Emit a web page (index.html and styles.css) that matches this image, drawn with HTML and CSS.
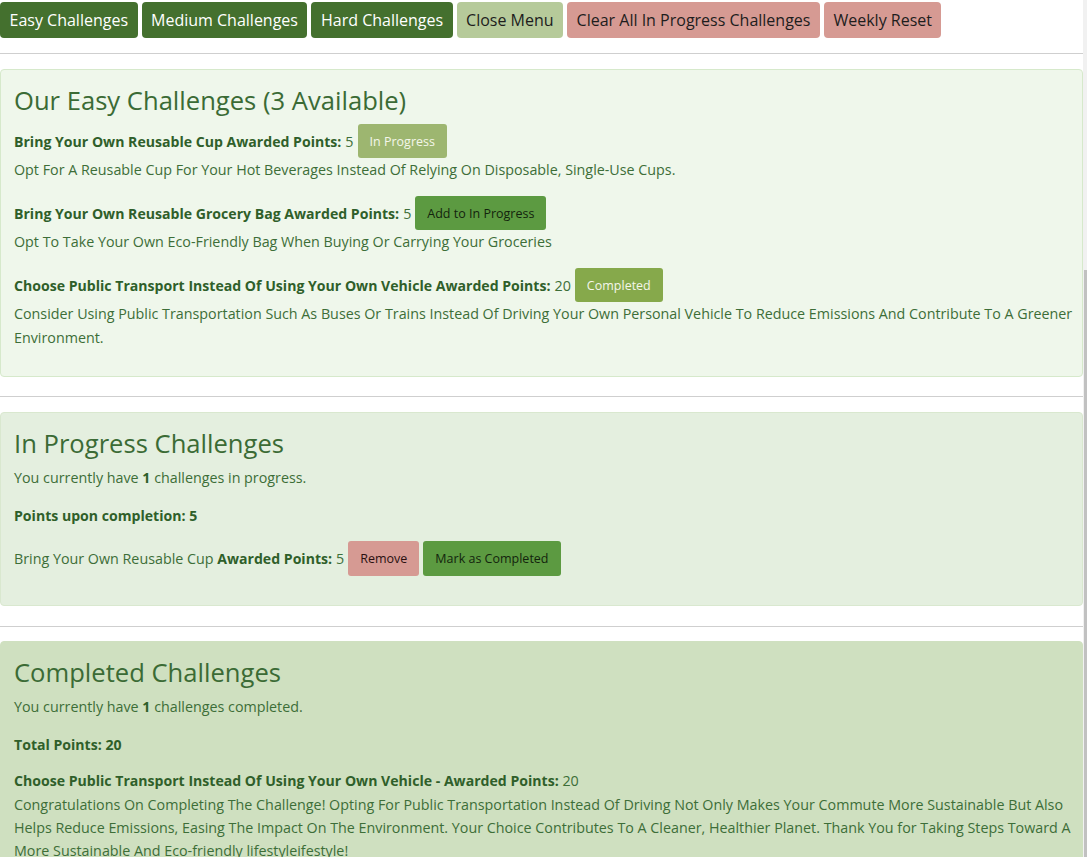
FILE: index.html
```html
<!DOCTYPE html>
<html lang="en">
<head>
<meta charset="utf-8">
<title>Challenges</title>
<link rel="stylesheet" href="styles.css">
</head>
<body>
<div class="page">
  <nav class="menu">
    <button class="mbtn mbtn-dark">Easy Challenges</button>
    <button class="mbtn mbtn-dark">Medium Challenges</button>
    <button class="mbtn mbtn-dark">Hard Challenges</button>
    <button class="mbtn mbtn-light">Close Menu</button>
    <button class="mbtn mbtn-red">Clear All In Progress Challenges</button>
    <button class="mbtn mbtn-red">Weekly Reset</button>
  </nav>
  <hr class="rule rule-top">

  <section class="card card-easy">
    <h2 class="card-title">Our Easy Challenges (3 Available)</h2>
    <div class="challenge">
      <div class="row"><strong>Bring Your Own Reusable Cup Awarded Points:</strong><span class="pts">5</span><button class="sbtn sbtn-inprog">In Progress</button></div>
      <p class="desc">Opt For A Reusable Cup For Your Hot Beverages Instead Of Relying On Disposable, Single-Use Cups.</p>
    </div>
    <div class="challenge">
      <div class="row"><strong>Bring Your Own Reusable Grocery Bag Awarded Points:</strong><span class="pts">5</span><button class="sbtn sbtn-add">Add to In Progress</button></div>
      <p class="desc">Opt To Take Your Own Eco-Friendly Bag When Buying Or Carrying Your Groceries</p>
    </div>
    <div class="challenge">
      <div class="row"><strong>Choose Public Transport Instead Of Using Your Own Vehicle Awarded Points:</strong><span class="pts">20</span><button class="sbtn sbtn-done">Completed</button></div>
      <p class="desc">Consider Using Public Transportation Such As Buses Or Trains Instead Of Driving Your Own Personal Vehicle To Reduce Emissions And Contribute To A Greener Environment.</p>
    </div>
  </section>
  <hr class="rule rule-mid">

  <section class="card card-progress">
    <h2 class="card-title">In Progress Challenges</h2>
    <p class="info info-first">You currently have <strong>1</strong> challenges in progress.</p>
    <p class="info info-strong"><strong>Points upon completion: 5</strong></p>
    <div class="row row-progress"><span>Bring Your Own Reusable Cup <strong>Awarded Points:</strong></span><span class="pts">5</span><button class="sbtn sbtn-remove">Remove</button><button class="sbtn sbtn-add">Mark as Completed</button></div>
  </section>
  <hr class="rule rule-low">

  <section class="card card-done">
    <h2 class="card-title">Completed Challenges</h2>
    <p class="info info-first">You currently have <strong>1</strong> challenges completed.</p>
    <p class="info info-strong"><strong>Total Points: 20</strong></p>
    <p class="info info-head"><strong>Choose Public Transport Instead Of Using Your Own Vehicle - Awarded Points:</strong> 20</p>
    <p class="congrats">Congratulations On Completing The Challenge! Opting For Public Transportation Instead Of Driving Not Only Makes Your Commute More Sustainable But Also Helps Reduce Emissions, Easing The Impact On The Environment. Your Choice Contributes To A Cleaner, Healthier Planet. Thank You for Taking Steps Toward A More Sustainable And Eco-friendly lifestyleifestyle!</p>
  </section>
</div>
<div class="scrollbar"><div class="thumb"></div></div>
</body>
</html>
```

FILE: styles.css
```css
html, body {
  margin: 0;
  padding: 0;
  overflow: hidden;
  background: #ffffff;
}

body {
  font-family: "Open Sans", "Noto Sans", "Liberation Sans", sans-serif;
  color: #3d6e38;
}

.page {
  width: 1083px;
}

.menu {
  display: flex;
  gap: 4px;
  padding-top: 2px;
}

.mbtn {
  font-family: inherit;
  font-size: 16px;
  height: 36px;
  padding: 0 9.5px;
  border: none;
  border-radius: 4px;
  cursor: pointer;
}

.mbtn-dark { background: #44702e; color: #ffffff; }
.mbtn-light { background: #b6ca9a; color: #1d1d1d; }
.mbtn-red { background: #d69a93; color: #1d1d1d; }

.rule {
  border: none;
  border-top: 1px solid #cfcfcf;
  margin: 0;
}
.rule-top { margin-top: 15px; margin-bottom: 15px; }
.rule-mid { margin-top: 19px; margin-bottom: 15px; }
.rule-low { margin-top: 20px; margin-bottom: 14px; }

.card {
  border: 1px solid #d6e9cb;
  border-radius: 4px;
  padding: 14px 2px 0 13px;
}
.card-easy { background: #eff7eb; padding-bottom: 26px; }
.card-progress { background: #e4efdf; padding-bottom: 29px; border-color: #d9e8cf; }
.card-done { background: #cfe0c0; border-color: #cfe0c0; padding-bottom: 10px; }

.card-title {
  margin: 0;
  font-size: 25.6px;
  font-weight: 400;
  line-height: 34px;
  color: #3b6b35;
}

.challenge { margin-top: 14px; }
.card-easy .challenge:first-of-type { margin-top: 6px; }

.row {
  display: flex;
  align-items: center;
  font-size: 14.3px;
  height: 34px;
}
.row strong { color: #2f5f2a; font-weight: 700; font-size: 14.1px; }
.pts { margin-left: 4px; margin-right: 4px; }

.sbtn {
  font-family: inherit;
  font-size: 12.5px;
  height: 34px;
  padding: 0 12px;
  border: none;
  border-radius: 3px;
  cursor: pointer;
}
.sbtn-inprog { background: #9db670; color: #f4f6ea; }
.sbtn-add { background: #5c9a41; color: #13240d; }
.sbtn-done { background: #86a94b; color: #f4f6ea; }
.sbtn-remove { background: #d69a93; color: #2a1010; margin-right: 4px; }

.desc {
  margin: 0;
  font-size: 14.3px;
  line-height: 24px;
}

.info {
  margin: 0;
  font-size: 14.3px;
  line-height: 24px;
}
.info strong { color: #2f5f2a; font-size: 14.1px; }
.info-first { margin-top: 5px; }
.info-strong { margin-top: 14px; }
.info-head { margin-top: 12px; }

.row-progress { margin-top: 13px; height: 35px; }
.row-progress .sbtn { height: 35px; }

.congrats {
  margin: 0;
  font-size: 14.3px;
  line-height: 23px;
}

.scrollbar {
  position: fixed;
  top: 0;
  right: 0;
  width: 4px;
  height: 857px;
  background: #f1f1f1;
}
.thumb {
  margin-top: 270px;
  margin-left: 1px;
  width: 3px;
  height: 587px;
  background: #c1c1c1;
}
```
